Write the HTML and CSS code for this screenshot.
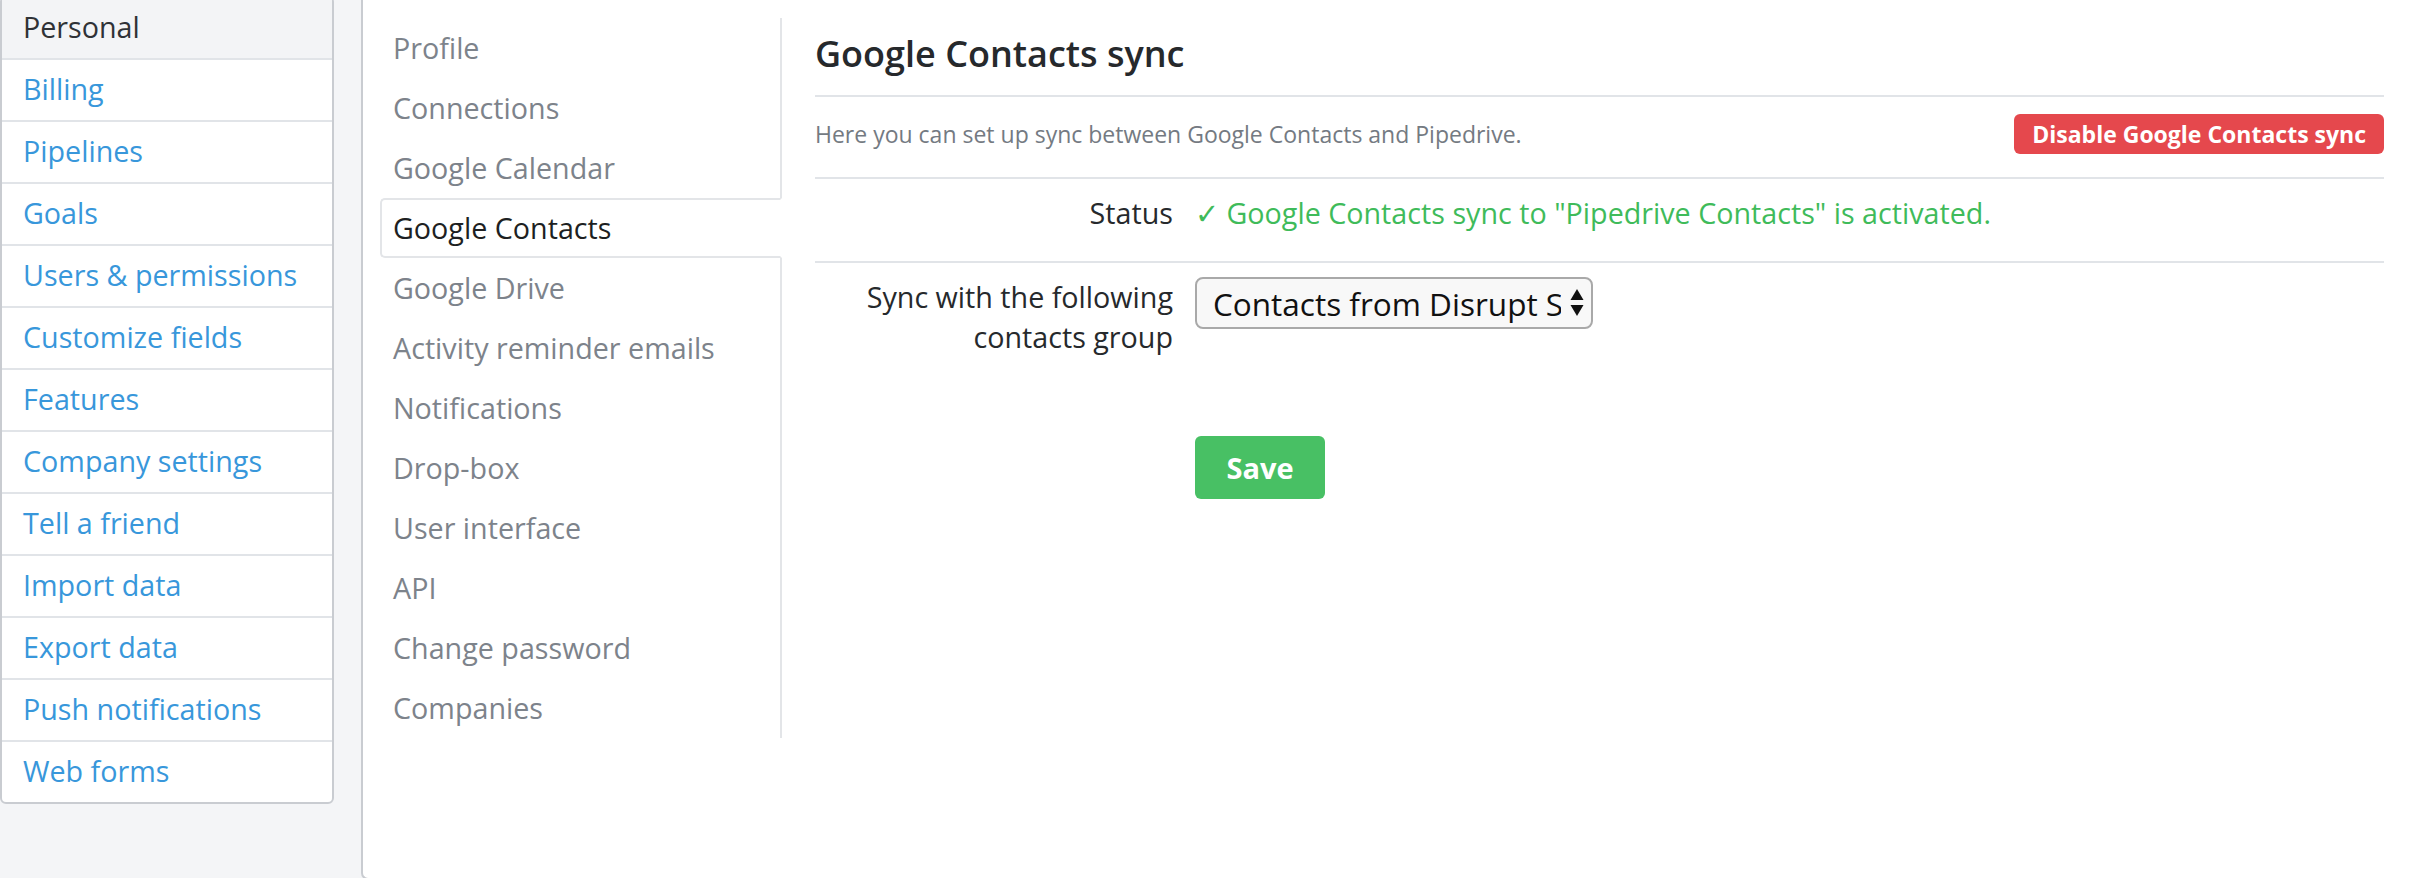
FILE: index.html
```html
<!DOCTYPE html>
<html lang="en">
<head>
<meta charset="utf-8">
<title>Google Contacts sync</title>
<link rel="stylesheet" href="styles.css">
</head>
<body>
<div class="page">
  <aside class="settings-menu">
    <a class="menu-item active" href="#">Personal</a>
    <a class="menu-item" href="#">Billing</a>
    <a class="menu-item" href="#">Pipelines</a>
    <a class="menu-item" href="#">Goals</a>
    <a class="menu-item" href="#">Users &amp; permissions</a>
    <a class="menu-item" href="#">Customize fields</a>
    <a class="menu-item" href="#">Features</a>
    <a class="menu-item" href="#">Company settings</a>
    <a class="menu-item" href="#">Tell a friend</a>
    <a class="menu-item" href="#">Import data</a>
    <a class="menu-item" href="#">Export data</a>
    <a class="menu-item" href="#">Push notifications</a>
    <a class="menu-item" href="#">Web forms</a>
  </aside>
  <main class="panel">
    <nav class="subnav">
      <a class="subnav-item" href="#">Profile</a>
      <a class="subnav-item" href="#">Connections</a>
      <a class="subnav-item" href="#">Google Calendar</a>
      <a class="subnav-item selected" href="#">Google Contacts</a>
      <a class="subnav-item" href="#">Google Drive</a>
      <a class="subnav-item" href="#">Activity reminder emails</a>
      <a class="subnav-item" href="#">Notifications</a>
      <a class="subnav-item" href="#">Drop-box</a>
      <a class="subnav-item" href="#">User interface</a>
      <a class="subnav-item" href="#">API</a>
      <a class="subnav-item" href="#">Change password</a>
      <a class="subnav-item" href="#">Companies</a>
    </nav>
    <section class="content">
      <h1 class="title">Google Contacts sync</h1>
      <div class="intro-row">
        <p class="intro">Here you can set up sync between Google Contacts and Pipedrive.</p>
        <button class="btn btn-danger" type="button">Disable Google Contacts sync</button>
      </div>
      <div class="form-row status-row">
        <div class="label">Status</div>
        <div class="value status-ok">✓ Google Contacts sync to "Pipedrive Contacts" is activated.</div>
      </div>
      <div class="form-row sync-row">
        <label class="label" for="group">Sync with the following contacts group</label>
        <div class="value">
          <div class="select-wrap">
            <select id="group" class="select">
              <option>Contacts from Disrupt SF 2017</option>
            </select>
            <svg class="select-arrows" width="14" height="30" viewBox="0 0 14 30" aria-hidden="true">
              <path d="M7 1 L13.5 12 L0.5 12 Z" fill="#111"/>
              <path d="M0.5 17 L13.5 17 L7 28 Z" fill="#111"/>
            </svg>
          </div>
        </div>
      </div>
      <div class="form-row actions-row">
        <div class="label"></div>
        <div class="value">
          <button class="btn btn-save" type="button">Save</button>
        </div>
      </div>
    </section>
  </main>
</div>
</body>
</html>
```
FILE: styles.css
```css
* {
  box-sizing: border-box;
}

html, body {
  margin: 0;
  padding: 0;
  height: 100%;
}

body {
  background: #f4f5f7;
  font-family: "Open Sans", "Liberation Sans", sans-serif;
  font-size: 28.7px;
  color: #26292c;
  overflow: hidden;
}

.page {
  display: flex;
  align-items: flex-start;
  height: 878px;
}

/* Left settings menu */
.settings-menu {
  width: 334px;
  flex: 0 0 334px;
  margin-top: -4px;
  background: #fff;
  border: 2px solid #c9ccd1;
  border-radius: 6px;
  display: flex;
  flex-direction: column;
  overflow: hidden;
}

.menu-item {
  display: flex;
  align-items: center;
  height: 62px;
  padding: 0 0 1px 21px;
  border-bottom: 2px solid #e1e4e8;
  color: #3897db;
  text-decoration: none;
  line-height: 1;
}

.menu-item:last-child {
  border-bottom: none;
  height: 60px;
}

.menu-item.active {
  background: #f3f4f6;
  color: #2f3236;
}

/* Main white panel */
.panel {
  flex: 1;
  margin-left: 27px;
  height: 880px;
  background: #fff;
  border-left: 2px solid #c9ccd1;
  border-bottom: 2px solid #c9ccd1;
  border-bottom-left-radius: 7px;
  display: flex;
  align-items: flex-start;
}

/* Secondary nav */
.subnav {
  width: 402px;
  flex: 0 0 402px;
  margin: 18px 0 0 17px;
  display: flex;
  flex-direction: column;
}

.subnav-item {
  display: flex;
  align-items: center;
  height: 60px;
  padding: 0 0 2px 11px;
  border-left: 2px solid transparent;
  border-right: 2px solid #e3e5e8;
  color: #7d838b;
  text-decoration: none;
}

.subnav-item.selected {
  border: 2px solid #e3e5e8;
  border-right-color: transparent;
  border-radius: 5px 0 0 5px;
  color: #1d1f22;
}

/* Content */
.content {
  flex: 1;
  padding: 0 32px 0 33px;
}

.title {
  margin: 0;
  padding: 30px 0 17px;
  font-size: 36px;
  line-height: 48px;
  font-weight: 600;
  color: #26292c;
  border-bottom: 2px solid #e1e4e8;
}

.intro-row {
  display: flex;
  align-items: center;
  justify-content: space-between;
  height: 82px;
  padding-bottom: 6px;
  border-bottom: 2px solid #e1e4e8;
}

.intro {
  margin: 0;
  font-size: 23px;
  color: #747a82;
}

.btn {
  font-family: "Open Sans", "Liberation Sans", sans-serif;
  border: none;
  color: #fff;
  font-weight: 700;
  cursor: pointer;
}

.btn-danger {
  height: 40px;
  padding: 0 18px;
  background: #e5484d;
  border-radius: 6px;
  font-size: 23px;
  line-height: 40px;
}

.form-row {
  display: flex;
  align-items: flex-start;
  line-height: 40px;
}

.label {
  width: 358px;
  flex: 0 0 358px;
  text-align: right;
  color: #26292c;
}

.value {
  margin-left: 22px;
}

.status-row {
  padding: 14px 0 28px;
  border-bottom: 2px solid #e1e4e8;
}

.status-ok {
  color: #3fbb5a;
}

.sync-row {
  padding-top: 14px;
}

.select-wrap {
  position: relative;
  width: 398px;
  height: 52px;
}

.select {
  appearance: none;
  -webkit-appearance: none;
  width: 100%;
  height: 100%;
  padding: 0 30px 0 16px;
  border: 2px solid #a9a9a9;
  border-radius: 8px;
  background: #f8f8f8;
  font-family: "Open Sans", "Liberation Sans", sans-serif;
  font-size: 31.5px;
  color: #111;
  overflow: hidden;
  text-overflow: clip;
}

.select-arrows {
  position: absolute;
  right: 9px;
  top: 11px;
  pointer-events: none;
}

.actions-row {
  margin-top: 79px;
}

.btn-save {
  width: 130px;
  height: 63px;
  background: #48c064;
  border-radius: 6px;
  font-size: 29px;
  line-height: 63px;
  padding: 0;
}
```
